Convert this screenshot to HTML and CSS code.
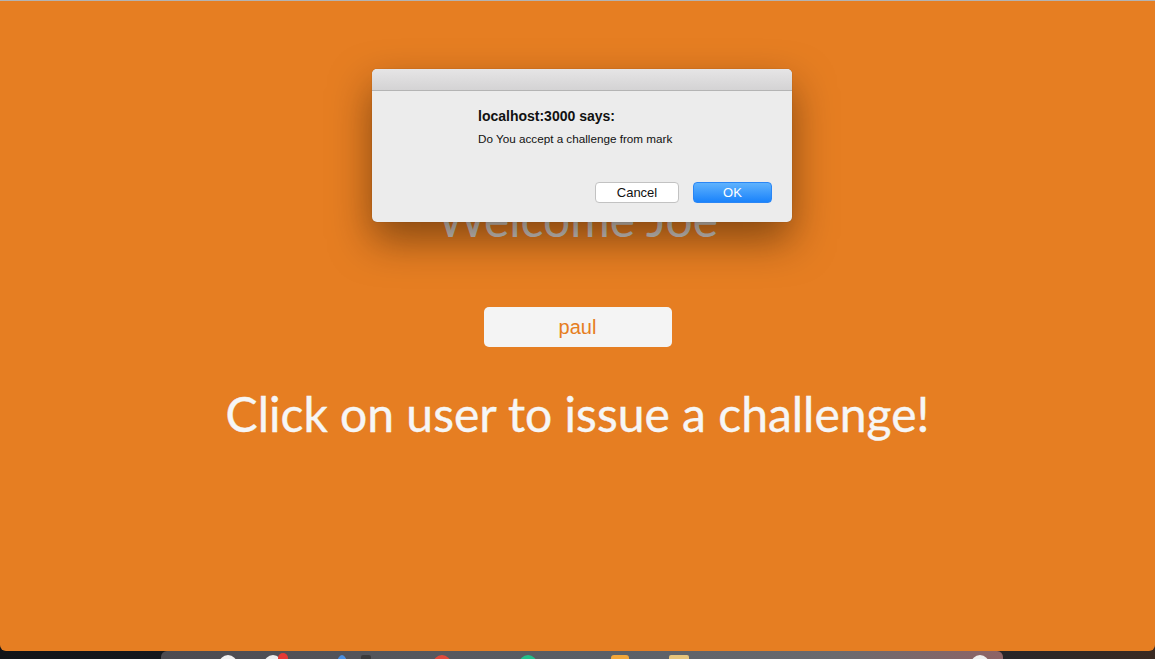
FILE: index.html
```html
<!DOCTYPE html>
<html>
<head>
<meta charset="utf-8">
<link rel="stylesheet" href="styles.css">
</head>
<body>
<div class="screen">
  <div class="window">
    <main class="content">
      <h1 class="welcome">Welcome Joe</h1>
      <button class="user">paul</button>
      <h2 class="prompt">Click on user to issue a challenge!</h2>
    </main>
  </div>
  <div class="dock">
    <span class="icon i1"></span>
    <span class="icon i2"></span>
    <span class="icon i2b"></span>
    <span class="icon i3"></span>
    <span class="icon i4"></span>
    <span class="icon i5"></span>
    <span class="icon i6"></span>
    <span class="icon i7"></span>
    <span class="icon i8"></span>
    <span class="icon i9"></span>
  </div>
  <div class="dialog">
    <div class="dialog-bar"></div>
    <div class="dialog-body">
      <div class="dialog-title">localhost:3000 says:</div>
      <div class="dialog-msg">Do You accept a challenge from mark</div>
      <div class="dialog-actions">
        <button class="btn btn-cancel">Cancel</button>
        <button class="btn btn-ok">OK</button>
      </div>
    </div>
  </div>
</div>
</body>
</html>
```

FILE: styles.css
```css
html, body {
  margin: 0;
  padding: 0;
  height: 659px;
  overflow: hidden;
}
body {
  background: #16191e;
}
.screen {
  position: relative;
  width: 1155px;
  height: 659px;
  background: linear-gradient(90deg, #121418 0%, #1b1f26 40%, #1e232b 80%, #3a2a22 100%);
}
.window {
  height: 650px;
  border-top: 1px solid #b3b3b3;
  background: #e67e22;
  border-radius: 0 0 6px 6px;
  position: relative;
  z-index: 2;
}
.content {
  display: flex;
  flex-direction: column;
  align-items: center;
  padding-top: 190px;
  font-family: "Lato", "Open Sans", sans-serif;
}
.welcome {
  margin: 0;
  font-size: 48px;
  line-height: 56px;
  font-weight: 400;
  color: #d2d2d2;
}
.user {
  margin-top: 60px;
  width: 188px;
  height: 40px;
  border: none;
  border-radius: 5px;
  background: #f4f4f4;
  color: #e67e22;
  font-family: "Liberation Sans", Arial, sans-serif;
  font-size: 20px;
  padding: 0;
}
.prompt {
  margin: 39px 0 0;
  font-size: 48px;
  line-height: 56px;
  font-weight: 400;
  color: #f6f6f6;
  -webkit-text-stroke: 0.4px #f6f6f6;
}
.dock {
  position: absolute;
  left: 161px;
  top: 651px;
  width: 842px;
  height: 40px;
  border-radius: 6px 6px 0 0;
  background: linear-gradient(90deg, #4c4a50 0%, #55575d 30%, #5b6068 55%, #6a6a6e 80%, #8f6466 100%);
  z-index: 1;
}
.icon {
  position: absolute;
  top: 4px;
  width: 18px;
  height: 18px;
  border-radius: 50%;
}
.i1 { left: 58px; background: #f2f2f2; }
.i2 { left: 103px; background: #eeeeee; }
.i2b { left: 117px; top: 2px; width: 10px; height: 10px; background: #e53935; }
.i3 { left: 176px; width: 10px; background: #4a8fe0; }
.i4 { left: 200px; width: 10px; border-radius: 2px; background: #3a3a3c; }
.i5 { left: 272px; background: #e04a3c; }
.i6 { left: 358px; background: #22c08a; }
.i7 { left: 450px; border-radius: 3px; background: #f3a73a; }
.i8 { left: 508px; width: 20px; border-radius: 2px; background: #e7c57c; }
.i9 { left: 810px; background: #f0f0f0; }
.dialog {
  position: absolute;
  left: 372px;
  top: 69px;
  width: 420px;
  height: 153px;
  border-radius: 5px;
  background: #ececec;
  box-shadow: 0 18px 40px rgba(40, 20, 0, 0.5), 0 0 1px rgba(0, 0, 0, 0.4);
  z-index: 5;
  display: flex;
  flex-direction: column;
  overflow: hidden;
  font-family: "Liberation Sans", Arial, sans-serif;
}
.dialog-bar {
  height: 21px;
  flex: none;
  background: linear-gradient(#e6e5e6, #d4d3d4);
  border-bottom: 1px solid #b4b4b4;
}
.dialog-body {
  flex: 1;
  display: flex;
  flex-direction: column;
  padding: 17px 20px 19px 106px;
}
.dialog-title {
  font-size: 14px;
  line-height: 16px;
  font-weight: 700;
  color: #111;
}
.dialog-msg {
  margin-top: 8px;
  font-size: 11.7px;
  line-height: 14px;
  color: #111;
}
.dialog-actions {
  margin-top: auto;
  display: flex;
  justify-content: flex-end;
  gap: 14px;
}
.btn {
  height: 21px;
  padding: 0;
  font-family: "Liberation Sans", Arial, sans-serif;
  font-size: 13px;
  border-radius: 4px;
}
.btn-cancel {
  width: 84px;
  background: #ffffff;
  border: 1px solid #c2c2c2;
  color: #111;
}
.btn-ok {
  width: 79px;
  border: 1px solid #2a86f5;
  background: linear-gradient(#5fb2fd, #1a83fb);
  color: #fff;
}
```
